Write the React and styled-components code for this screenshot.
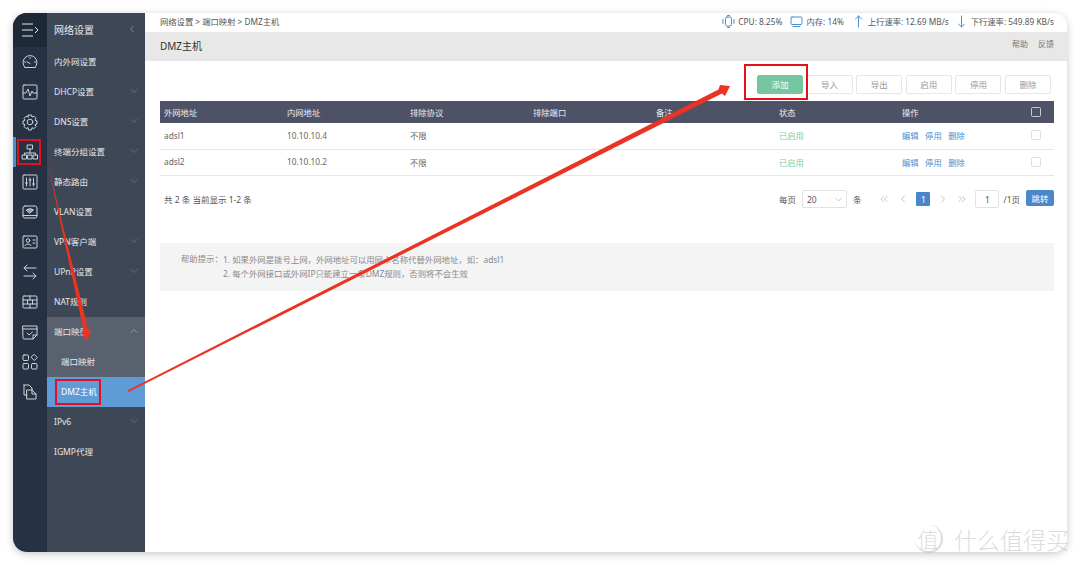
import React from "react";
import styled, { createGlobalStyle } from "styled-components";
import { ChevronDown, ChevronUp, ChevronLeft, ChevronRight, ChevronsLeft, ChevronsRight } from "lucide-react";

const GlobalStyle = createGlobalStyle`
  html, body {
    margin: 0;
    padding: 0;
    background: #fff;
    overflow: hidden;
  }
  * { box-sizing: border-box; }
  body {
    font-family: "Noto Sans", "Noto Sans CJK SC", sans-serif;
    font-size: 9px;
    color: #666;
  }
`;

const Icon = ({ children }) => (
  <svg width="18" height="18" viewBox="0 0 18 18" fill="none" stroke="#ccd2d9" strokeWidth="1" strokeLinecap="round" strokeLinejoin="round">
    {children}
  </svg>
);

const StatIcon = ({ children }) => (
  <svg width="13" height="13" viewBox="0 0 13 13" fill="none" stroke="#4a90d0" strokeWidth="1" strokeLinecap="round" strokeLinejoin="round">
    {children}
  </svg>
);

const railIcons = [
  <Icon><path d="M4 14.500a7 7 0 1 1 10 0" /><path d="M4 14.500h10" /><path d="M6 9l3 1.500" /><path d="M3.500 9h1M13.500 9h1M9 4.500v1" /></Icon>,
  <Icon><rect x="2" y="2" width="14" height="14" rx="1" /><path d="M2 10h3l2-4 2 7 2-5 1 2h4" /></Icon>,
  <Icon><circle cx="9" cy="9" r="2.800" /><path d="M7.500 2h3l.5 2 2-.8 2 2.200-1 1.800 2 .8v3l-2 .6 1 1.900-2 2.100-2-.9-.5 2.300h-3l-.5-2.300-2 .9-2-2.100 1-1.900-2-.6v-3l2-.8-1-1.800 2-2.200 2 .8z" /></Icon>,
  <Icon><rect x="6.500" y="2" width="5" height="4" /><path d="M9 6v4M3.500 12v-2h11v2" /><rect x="1.500" y="12" width="4" height="4" /><rect x="7" y="12" width="4" height="4" /><rect x="12.500" y="12" width="4" height="4" /></Icon>,
  <Icon><rect x="2" y="2" width="14" height="14" rx="1" /><path d="M5.500 5v8M9 5v8M12.500 5v8M4.500 10h2M8 7h2M11.500 11h2" /></Icon>,
  <Icon><rect x="2" y="3" width="14" height="12" rx="2" /><path d="M2 12.500h14" /><path d="M5.500 7c2.200-1.700 4.800-1.700 7 0l-3.500 3z" fill="#9aa2ac" /></Icon>,
  <Icon><rect x="2" y="3" width="14" height="12" rx="1" /><circle cx="7" cy="7.500" r="1.800" /><path d="M4 12.500c.4-2 5.600-2 6 0M12 7h2M12 10h2" /></Icon>,
  <Icon><path d="M15 5H3l3-3M3 5l3 3M3 13h12l-3-3M15 13l-3 3" /></Icon>,
  <Icon><rect x="2" y="3" width="14" height="12" rx="1" /><path d="M2 7h14M2 11h14M9 3v4M6.500 7v4M11.500 7v4M9 11v4" /></Icon>,
  <Icon><path d="M2 3h14v9l-4 4H3a1 1 0 0 1-1-1z" /><path d="M2 6h14M12 16v-4h4M6 10l2 2 3.500-3" /></Icon>,
  <Icon><rect x="2" y="2" width="5.500" height="5.500" rx="1" /><rect x="2" y="10.500" width="5.500" height="5.500" rx="1" /><rect x="10.500" y="10.500" width="5.500" height="5.500" rx="1" /><path d="M13.300 1.500l3 3-3 3-3-3z" /></Icon>,
  <Icon><path d="M3 2h5l3 3v2" /><path d="M3 2v10h3" /><path d="M6 7h5l4 4v5H6z" /><path d="M11 7v4h4" /></Icon>,
];

const menuItems = [
  { label: "内外网设置" },
  { label: "DHCP设置", arrow: true },
  { label: "DNS设置", arrow: true },
  { label: "终端分组设置", arrow: true },
  { label: "静态路由", arrow: true },
  { label: "VLAN设置" },
  { label: "VPN客户端", arrow: true },
  { label: "UPnP设置", arrow: true },
  { label: "NAT规则" },
  { label: "端口映射", open: true },
  { label: "端口映射", sub: true },
  { label: "DMZ主机", sub: true, active: true },
  { label: "IPv6", arrow: true },
  { label: "IGMP代理" },
];

const rows = [
  { wan: "adsl1", lan: "10.10.10.4" },
  { wan: "adsl2", lan: "10.10.10.2" },
];

const App = () => (
  <Page>
    <GlobalStyle />
    <Window>
      <Rail>
        <RailHead>
          <svg width="18" height="18" viewBox="0 0 18 18" fill="none" stroke="#e4e7ea" strokeWidth="1">
            <path d="M1 3h11M1 9h11M1 15h11M14 6l3 3-3 3" />
          </svg>
        </RailHead>
        {railIcons.map((icon, i) => (
          <RailItem key={i} $active={i === 3}>{icon}</RailItem>
        ))}
      </Rail>
      <Menu>
        <MenuHead>
          网络设置
          <ChevronLeft size={12} strokeWidth={1} color="#c4c8cd" />
        </MenuHead>
        {menuItems.map((item, i) => (
          <MenuItem key={i} $open={item.open} $sub={item.sub} $active={item.active}>
            {item.label}
            {item.arrow && <ChevronDown size={12} strokeWidth={1} color="#8f96a0" />}
            {item.open && <ChevronUp size={12} strokeWidth={1} color="#c4c8cd" />}
          </MenuItem>
        ))}
      </Menu>
      <Main>
        <TopBar>
          <span>网络设置 &gt; 端口映射 &gt; DMZ主机</span>
          <Stats>
            <Stat $gap={8}>
              <StatIcon><rect x="3.500" y="2" width="6" height="9" rx="1.500" /><path d="M1 4.500v4M12 4.500v4M5.500 .5h2M5.500 12.500h2" /></StatIcon>
              CPU: 8.25%
            </Stat>
            <Stat $gap={8}>
              <StatIcon><rect x="1" y="2" width="11" height="7.500" rx="1" /><path d="M3 11.500h7" /></StatIcon>
              内存: 14%
            </Stat>
            <Stat $gap={6}>
              <StatIcon><path d="M6.500 12V1M3.500 4l3-3 3 3" /></StatIcon>
              上行速率: 12.69 MB/s
            </Stat>
            <Stat>
              <StatIcon><path d="M6.500 1v11M3.500 9l3 3 3-3" /></StatIcon>
              下行速率: 549.89 KB/s
            </Stat>
          </Stats>
        </TopBar>
        <TitleBar>
          <Title>DMZ主机</Title>
          <TitleLinks>
            <span>帮助</span>
            <span>反馈</span>
          </TitleLinks>
        </TitleBar>
        <Toolbar>
          <ToolButton $primary>添加</ToolButton>
          <ToolButton>导入</ToolButton>
          <ToolButton>导出</ToolButton>
          <ToolButton>启用</ToolButton>
          <ToolButton>停用</ToolButton>
          <ToolButton>删除</ToolButton>
        </Toolbar>
        <Table>
          <HeadRow>
            <span>外网地址</span>
            <span>内网地址</span>
            <span>排除协议</span>
            <span>排除端口</span>
            <span>备注</span>
            <span>状态</span>
            <span>操作</span>
            <Check $dark />
          </HeadRow>
          {rows.map((row) => (
            <BodyRow key={row.wan}>
              <span>{row.wan}</span>
              <span>{row.lan}</span>
              <span>不限</span>
              <span />
              <span />
              <Status>已启用</Status>
              <Actions>
                <span>编辑</span>
                <span>停用</span>
                <span>删除</span>
              </Actions>
              <Check />
            </BodyRow>
          ))}
        </Table>
        <Pager>
          <span>共 2 条 当前显示 1-2 条</span>
          <PagerRight>
            <span>每页</span>
            <Select>20<ChevronDown size={11} strokeWidth={1} color="#888" /></Select>
            <span>条</span>
            <PageNav>
              <ChevronsLeft size={12} strokeWidth={1} color="#888" />
              <ChevronLeft size={12} strokeWidth={1} color="#888" />
              <PageNum>1</PageNum>
              <ChevronRight size={12} strokeWidth={1} color="#888" />
              <ChevronsRight size={12} strokeWidth={1} color="#888" />
            </PageNav>
            <PageInput>1</PageInput>
            <PageTotal>/1页</PageTotal>
            <JumpButton>跳转</JumpButton>
          </PagerRight>
        </Pager>
        <Help>
          <HelpLabel>帮助提示：</HelpLabel>
          <div>
            <div>1. 如果外网是拨号上网，外网地址可以用网卡名称代替外网地址，如：adsl1</div>
            <div>2. 每个外网接口或外网IP只能建立一条DMZ规则，否则将不会生效</div>
          </div>
        </Help>
      </Main>
    </Window>

    <Overlay width="1080" height="565" viewBox="0 0 1080 565">
      <rect x="18" y="140" width="22" height="24" fill="none" stroke="#e3101c" strokeWidth="2" />
      <rect x="56" y="380" width="44" height="24" fill="none" stroke="#e3101c" strokeWidth="2" />
      <rect x="745" y="65" width="62" height="34" fill="none" stroke="#e3101c" strokeWidth="2" />
      <path d="M47 160L83.500 330 81 332 87 341 91 331 88 329z" fill="#ea3323" />
      <path d="M127.500 390.500L718.500 89.500 720 85 730 86 725 96 722 93.500 128.500 392z" fill="#ea3323" />
    </Overlay>

    <Watermark>
      <WatermarkBadge>值</WatermarkBadge>
      什么值得买
    </Watermark>
  </Page>
);

const Page = styled.div`
  position: relative;
  width: 1080px;
  height: 565px;
  padding: 13px;
  background: #fff;
  overflow: hidden;
`;

const Window = styled.div`
  display: flex;
  width: 1054px;
  height: 539px;
  border-radius: 14px;
  overflow: hidden;
  background: #fff;
  box-shadow: 0 2px 9px rgba(0, 0, 0, 0.22);
`;

const Rail = styled.div`
  display: flex;
  flex-direction: column;
  flex: 0 0 34px;
  background: #263243;
`;

const RailHead = styled.div`
  display: flex;
  align-items: center;
  justify-content: center;
  height: 34px;
  background: #1e2937;
`;

const RailItem = styled.div`
  display: flex;
  align-items: center;
  justify-content: center;
  height: 30px;
  border-left: ${(p) => (p.$active ? "3px solid #4a90d0" : "0")};
  padding-right: ${(p) => (p.$active ? "3px" : "0")};
`;

const Menu = styled.div`
  display: flex;
  flex-direction: column;
  flex: 0 0 98px;
  background: #3e4756;
  color: #e6e8eb;
`;

const MenuHead = styled.div`
  display: flex;
  align-items: center;
  justify-content: space-between;
  height: 34px;
  padding: 0 7px 2px;
  font-size: 10px;
  color: #e6e8eb;
`;

const MenuItem = styled.div`
  display: flex;
  align-items: center;
  justify-content: space-between;
  height: 30px;
  padding: 0 5px 2px ${(p) => (p.$sub ? "14px" : "7px")};
  font-size: 8.500px;
  color: ${(p) => (p.$active ? "#fff" : "#e6e8eb")};
  background: ${(p) => {
    if (p.$active) return "#5f9bd6";
    if (p.$open || p.$sub) return "#5a616e";
    return "transparent";
  }};
`;

const Main = styled.div`
  display: flex;
  flex-direction: column;
  flex: 1;
  min-width: 0;
  background: #fff;
`;

const TopBar = styled.div`
  display: flex;
  align-items: center;
  justify-content: space-between;
  height: 19px;
  padding: 0 13px 3px 15px;
  font-size: 8.300px;
  color: #555;
`;

const Stats = styled.div`
  display: flex;
  align-items: center;
`;

const Stat = styled.span`
  display: flex;
  align-items: center;
  gap: 3px;
  margin-right: ${(p) => p.$gap || 0}px;
`;

const TitleBar = styled.div`
  display: flex;
  align-items: center;
  justify-content: space-between;
  height: 29px;
  padding: 0 13px 2px 15px;
  background: #e8e8e8;
`;

const Title = styled.div`
  font-size: 10px;
  color: #333;
`;

const TitleLinks = styled.div`
  display: flex;
  gap: 10px;
  margin-top: -4px;
  font-size: 8px;
  color: #777;
`;

const Toolbar = styled.div`
  display: flex;
  justify-content: flex-end;
  gap: 3.600px;
  padding: 14px 16px 0 0;
`;

const ToolButton = styled.div`
  display: flex;
  align-items: center;
  justify-content: center;
  width: 46px;
  height: 19px;
  border-radius: 2px;
  font-size: 8.500px;
  padding-bottom: 1px;
  color: ${(p) => (p.$primary ? "#fff" : "#999")};
  background: ${(p) => (p.$primary ? "#76c6a0" : "#fff")};
  border: 1px solid ${(p) => (p.$primary ? "#76c6a0" : "#e6e6e6")};
`;

const Table = styled.div`
  margin: 7px 13px 0 15px;
  font-size: 8.300px;
`;

const Row = styled.div`
  display: grid;
  grid-template-columns: repeat(7, 123px) 1fr;
  align-items: center;
  padding-left: 4px;
`;

const HeadRow = styled(Row)`
  height: 22px;
  padding-bottom: 1px;
  background: #4e5266;
  color: #eceef1;
`;

const BodyRow = styled(Row)`
  height: 26.500px;
  padding-bottom: 1px;
  border-bottom: 1px solid #e6e6e6;
  color: #666;
`;

const Status = styled.span`
  color: #7fcba6;
`;

const Actions = styled.span`
  display: flex;
  gap: 6.500px;
  color: #4a90d0;
`;

const Check = styled.i`
  display: block;
  justify-self: end;
  width: 10px;
  height: 10px;
  margin-right: 13px;
  border-radius: 1.500px;
  border: 1px solid ${(p) => (p.$dark ? "#c8cbd2" : "#dedede")};
  background: ${(p) => (p.$dark ? "transparent" : "#fff")};
`;

const Pager = styled.div`
  display: flex;
  align-items: center;
  justify-content: space-between;
  height: 18px;
  margin: 14px 13px 0 19px;
  font-size: 8.500px;
  color: #555;
`;

const PagerRight = styled.div`
  display: flex;
  align-items: center;
`;

const Select = styled.div`
  display: flex;
  align-items: center;
  justify-content: space-between;
  width: 45px;
  height: 18px;
  margin: 0 6px;
  padding: 0 2px 0 4px;
  border: 1px solid #e2e2e2;
  border-radius: 2px;
`;

const PageNav = styled.div`
  display: flex;
  align-items: center;
  gap: 7px;
  margin: 0 7px 0 17px;
`;

const PageNum = styled.span`
  display: flex;
  align-items: center;
  justify-content: center;
  width: 14px;
  height: 14px;
  border-radius: 1px;
  color: #fff;
  background: #4a86cc;
`;

const PageInput = styled.div`
  display: flex;
  align-items: center;
  justify-content: center;
  width: 24px;
  height: 18px;
  border: 1px solid #e2e2e2;
  border-radius: 2px;
`;

const PageTotal = styled.span`
  margin: 0 6px 0 4px;
`;

const JumpButton = styled.div`
  display: flex;
  align-items: center;
  justify-content: center;
  width: 28px;
  height: 16px;
  margin-top: -2px;
  border-radius: 2px;
  color: #fff;
  background: #4a86cc;
`;

const Help = styled.div`
  display: flex;
  align-items: center;
  height: 48px;
  margin: 35px 13px 0 15px;
  padding-left: 21px;
  background: #f4f4f4;
  font-size: 8.400px;
  line-height: 14px;
  color: #8a8a8a;
`;

const HelpLabel = styled.span`
  flex: 0 0 42px;
  align-self: flex-start;
  margin-top: 9px;
  white-space: nowrap;
`;

const Overlay = styled.svg`
  position: absolute;
  top: 0;
  left: 0;
  pointer-events: none;
`;

const Watermark = styled.div`
  position: absolute;
  left: 915px;
  top: 523px;
  display: flex;
  align-items: center;
  gap: 11px;
  font-family: "Noto Sans CJK SC", sans-serif;
  font-weight: 300;
  font-size: 23px;
  line-height: 32px;
  white-space: nowrap;
  color: rgba(190, 190, 190, 0.55);
`;

const WatermarkBadge = styled.span`
  display: flex;
  align-items: center;
  justify-content: center;
  width: 28px;
  height: 28px;
  border-radius: 50%;
  border-right: 2px solid rgba(190, 190, 190, 0.55);
  border-bottom: 2px solid rgba(190, 190, 190, 0.55);
  font-size: 21px;
`;

export default App;
